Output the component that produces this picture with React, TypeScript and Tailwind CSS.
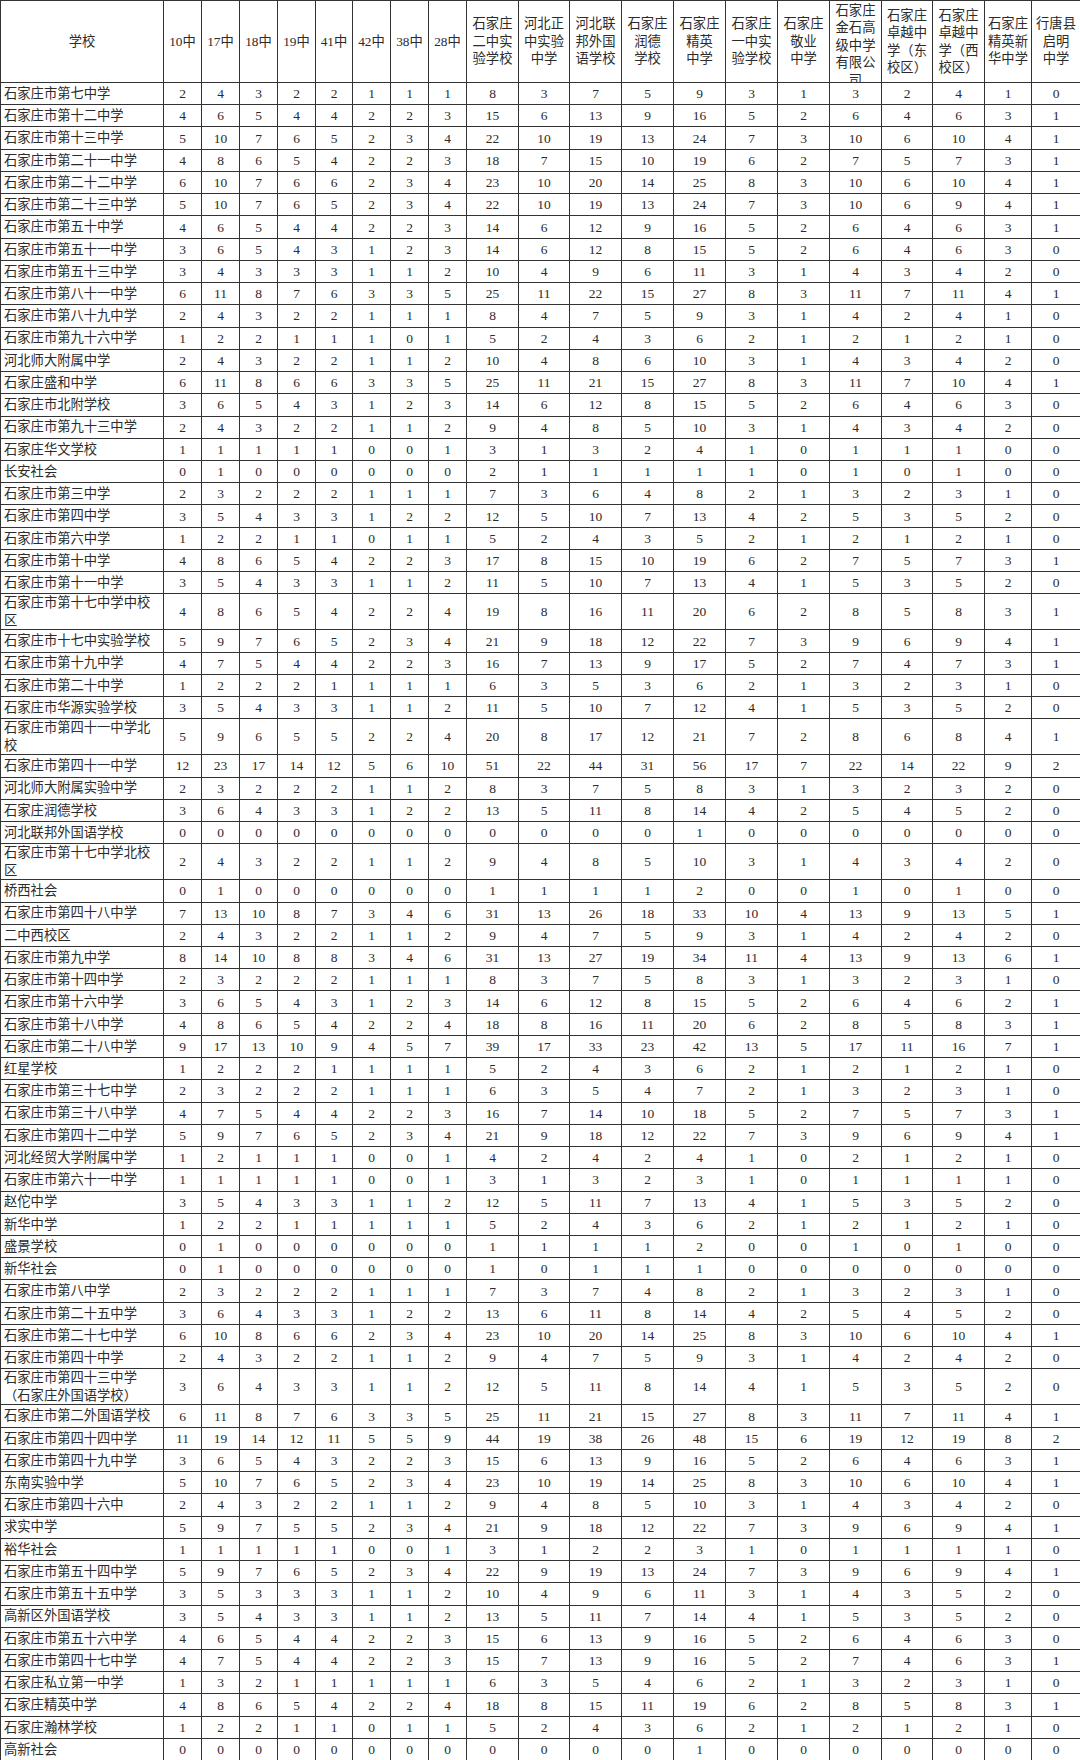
import React from "react";

const heads: string[][] = [
  ["10中"], ["17中"], ["18中"], ["19中"], ["41中"], ["42中"], ["38中"], ["28中"],
  ["石家庄", "二中实", "验学校"],
  ["河北正", "中实验", "中学"],
  ["河北联", "邦外国", "语学校"],
  ["石家庄", "润德", "学校"],
  ["石家庄", "精英", "中学"],
  ["石家庄", "一中实", "验学校"],
  ["石家庄", "敬业", "中学"],
  ["石家庄", "金石高", "级中学", "有限公", "司"],
  ["石家庄", "卓越中", "学（东", "校区）"],
  ["石家庄", "卓越中", "学（西", "校区）"],
  ["石家庄", "精英新", "华中学"],
  ["行唐县", "启明", "中学"],
];

const widths = [163, 38, 38, 38, 38, 37, 38, 38, 38, 52, 51, 52, 52, 52, 52, 52, 52, 51, 52, 47, 49];

const raw = `石家庄市第七中学|2 4 3 2 2 1 1 1 8 3 7 5 9 3 1 3 2 4 1 0
石家庄市第十二中学|4 6 5 4 4 2 2 3 15 6 13 9 16 5 2 6 4 6 3 1
石家庄市第十三中学|5 10 7 6 5 2 3 4 22 10 19 13 24 7 3 10 6 10 4 1
石家庄市第二十一中学|4 8 6 5 4 2 2 3 18 7 15 10 19 6 2 7 5 7 3 1
石家庄市第二十二中学|6 10 7 6 6 2 3 4 23 10 20 14 25 8 3 10 6 10 4 1
石家庄市第二十三中学|5 10 7 6 5 2 3 4 22 10 19 13 24 7 3 10 6 9 4 1
石家庄市第五十中学|4 6 5 4 4 2 2 3 14 6 12 9 16 5 2 6 4 6 3 1
石家庄市第五十一中学|3 6 5 4 3 1 2 3 14 6 12 8 15 5 2 6 4 6 3 0
石家庄市第五十三中学|3 4 3 3 3 1 1 2 10 4 9 6 11 3 1 4 3 4 2 0
石家庄市第八十一中学|6 11 8 7 6 3 3 5 25 11 22 15 27 8 3 11 7 11 4 1
石家庄市第八十九中学|2 4 3 2 2 1 1 1 8 4 7 5 9 3 1 4 2 4 1 0
石家庄市第九十六中学|1 2 2 1 1 1 0 1 5 2 4 3 6 2 1 2 1 2 1 0
河北师大附属中学|2 4 3 2 2 1 1 2 10 4 8 6 10 3 1 4 3 4 2 0
石家庄盛和中学|6 11 8 6 6 3 3 5 25 11 21 15 27 8 3 11 7 10 4 1
石家庄市北附学校|3 6 5 4 3 1 2 3 14 6 12 8 15 5 2 6 4 6 3 0
石家庄市第九十三中学|2 4 3 2 2 1 1 2 9 4 8 5 10 3 1 4 3 4 2 0
石家庄华文学校|1 1 1 1 1 0 0 1 3 1 3 2 4 1 0 1 1 1 0 0
长安社会|0 1 0 0 0 0 0 0 2 1 1 1 1 1 0 1 0 1 0 0
石家庄市第三中学|2 3 2 2 2 1 1 1 7 3 6 4 8 2 1 3 2 3 1 0
石家庄市第四中学|3 5 4 3 3 1 2 2 12 5 10 7 13 4 2 5 3 5 2 0
石家庄市第六中学|1 2 2 1 1 0 1 1 5 2 4 3 5 2 1 2 1 2 1 0
石家庄市第十中学|4 8 6 5 4 2 2 3 17 8 15 10 19 6 2 7 5 7 3 1
石家庄市第十一中学|3 5 4 3 3 1 1 2 11 5 10 7 13 4 1 5 3 5 2 0
石家庄市第十七中学中校区|4 8 6 5 4 2 2 4 19 8 16 11 20 6 2 8 5 8 3 1|2
石家庄市十七中实验学校|5 9 7 6 5 2 3 4 21 9 18 12 22 7 3 9 6 9 4 1
石家庄市第十九中学|4 7 5 4 4 2 2 3 16 7 13 9 17 5 2 7 4 7 3 1
石家庄市第二十中学|1 2 2 2 1 1 1 1 6 3 5 3 6 2 1 3 2 3 1 0
石家庄市华源实验学校|3 5 4 3 3 1 1 2 11 5 10 7 12 4 1 5 3 5 2 0
石家庄市第四十一中学北校|5 9 6 5 5 2 2 4 20 8 17 12 21 7 2 8 6 8 4 1|2
石家庄市第四十一中学|12 23 17 14 12 5 6 10 51 22 44 31 56 17 7 22 14 22 9 2
河北师大附属实验中学|2 3 2 2 2 1 1 2 8 3 7 5 8 3 1 3 2 3 2 0
石家庄润德学校|3 6 4 3 3 1 2 2 13 5 11 8 14 4 2 5 4 5 2 0
河北联邦外国语学校|0 0 0 0 0 0 0 0 0 0 0 0 1 0 0 0 0 0 0 0
石家庄市第十七中学北校区|2 4 3 2 2 1 1 2 9 4 8 5 10 3 1 4 3 4 2 0|2
桥西社会|0 1 0 0 0 0 0 0 1 1 1 1 2 0 0 1 0 1 0 0
石家庄市第四十八中学|7 13 10 8 7 3 4 6 31 13 26 18 33 10 4 13 9 13 5 1
二中西校区|2 4 3 2 2 1 1 2 9 4 7 5 9 3 1 4 2 4 2 0
石家庄市第九中学|8 14 10 8 8 3 4 6 31 13 27 19 34 11 4 13 9 13 6 1
石家庄市第十四中学|2 3 2 2 2 1 1 1 8 3 7 5 8 3 1 3 2 3 1 0
石家庄市第十六中学|3 6 5 4 3 1 2 3 14 6 12 8 15 5 2 6 4 6 2 1
石家庄市第十八中学|4 8 6 5 4 2 2 4 18 8 16 11 20 6 2 8 5 8 3 1
石家庄市第二十八中学|9 17 13 10 9 4 5 7 39 17 33 23 42 13 5 17 11 16 7 1
红星学校|1 2 2 2 1 1 1 1 5 2 4 3 6 2 1 2 1 2 1 0
石家庄市第三十七中学|2 3 2 2 2 1 1 1 6 3 5 4 7 2 1 3 2 3 1 0
石家庄市第三十八中学|4 7 5 4 4 2 2 3 16 7 14 10 18 5 2 7 5 7 3 1
石家庄市第四十二中学|5 9 7 6 5 2 3 4 21 9 18 12 22 7 3 9 6 9 4 1
河北经贸大学附属中学|1 2 1 1 1 0 0 1 4 2 4 2 4 1 0 2 1 2 1 0
石家庄市第六十一中学|1 1 1 1 1 0 0 1 3 1 3 2 3 1 0 1 1 1 1 0
赵佗中学|3 5 4 3 3 1 1 2 12 5 11 7 13 4 1 5 3 5 2 0
新华中学|1 2 2 1 1 1 1 1 5 2 4 3 6 2 1 2 1 2 1 0
盛景学校|0 1 0 0 0 0 0 0 1 1 1 1 2 0 0 1 0 1 0 0
新华社会|0 1 0 0 0 0 0 0 1 0 1 1 1 0 0 0 0 0 0 0
石家庄市第八中学|2 3 2 2 2 1 1 1 7 3 7 4 8 2 1 3 2 3 1 0
石家庄市第二十五中学|3 6 4 3 3 1 2 2 13 6 11 8 14 4 2 5 4 5 2 0
石家庄市第二十七中学|6 10 8 6 6 2 3 4 23 10 20 14 25 8 3 10 6 10 4 1
石家庄市第四十中学|2 4 3 2 2 1 1 2 9 4 7 5 9 3 1 4 2 4 2 0
石家庄市第四十三中学（石家庄外国语学校）|3 6 4 3 3 1 1 2 12 5 11 8 14 4 1 5 3 5 2 0|2
石家庄市第二外国语学校|6 11 8 7 6 3 3 5 25 11 21 15 27 8 3 11 7 11 4 1
石家庄市第四十四中学|11 19 14 12 11 5 5 9 44 19 38 26 48 15 6 19 12 19 8 2
石家庄市第四十九中学|3 6 5 4 3 2 2 3 15 6 13 9 16 5 2 6 4 6 3 1
东南实验中学|5 10 7 6 5 2 3 4 23 10 19 14 25 8 3 10 6 10 4 1
石家庄市第四十六中|2 4 3 2 2 1 1 2 9 4 8 5 10 3 1 4 3 4 2 0
求实中学|5 9 7 5 5 2 3 4 21 9 18 12 22 7 3 9 6 9 4 1
裕华社会|1 1 1 1 1 0 0 1 3 1 2 2 3 1 0 1 1 1 1 0
石家庄市第五十四中学|5 9 7 6 5 2 3 4 22 9 19 13 24 7 3 9 6 9 4 1
石家庄市第五十五中学|3 5 3 3 3 1 1 2 10 4 9 6 11 3 1 4 3 5 2 0
高新区外国语学校|3 5 4 3 3 1 1 2 13 5 11 7 14 4 1 5 3 5 2 0
石家庄市第五十六中学|4 6 5 4 4 2 2 3 15 6 13 9 16 5 2 6 4 6 3 0
石家庄市第四十七中学|4 7 5 4 4 2 2 3 15 7 13 9 16 5 2 7 4 6 3 1
石家庄私立第一中学|1 3 2 1 1 1 1 1 6 3 5 4 6 2 1 3 2 3 1 0
石家庄精英中学|4 8 6 5 4 2 2 4 18 8 15 11 19 6 2 8 5 8 3 1
石家庄瀚林学校|1 2 2 1 1 0 1 1 5 2 4 3 6 2 1 2 1 2 1 0
高新社会|0 0 0 0 0 0 0 0 0 0 0 0 1 0 0 0 0 0 0 0`;

const rows = raw.split("\n").map((line) => {
  const [name, nums, dbl] = line.split("|");
  return { name, nums: nums.trim().split(" "), dbl: dbl === "2" };
});

export default function App() {
  return (
    <div className="w-[1080px] bg-white text-[#2b2b2b] font-['Liberation_Serif','Noto_Sans_CJK_SC',serif]">
      <table className="border-collapse table-fixed w-[1080px]">
        <colgroup>
          {widths.map((w, i) => (
            <col key={i} style={{ width: w }} />
          ))}
        </colgroup>
        <thead>
          <tr className="h-[82px]">
            <th className="border border-[#333] font-normal text-[13.3px] leading-[17.5px] text-center align-middle">
              学校
            </th>
            {heads.map((h, i) => (
              <th
                key={i}
                className="border border-[#333] font-normal text-[13.3px] leading-[17.5px] text-center align-middle p-0"
              >
                {h.length > 4 ? (
                  <div className="h-[80px] overflow-hidden">
                    {h.map((l, j) => (
                      <div key={j}>{l}</div>
                    ))}
                  </div>
                ) : (
                  h.map((l, j) => <div key={j}>{l}</div>)
                )}
              </th>
            ))}
          </tr>
        </thead>
        <tbody>
          {rows.map((r, i) => (
            <tr key={i} className={r.dbl ? "h-[35.6px]" : "h-[22.24px]"}>
              <td className="border border-[#333] text-[13.3px] leading-[17.5px] pl-[3px] pr-[2px] py-0 text-left align-middle">
                {r.name}
              </td>
              {r.nums.map((n, j) => (
                <td
                  key={j}
                  className="border border-[#333] text-[13.5px] leading-[17px] p-0 text-center align-middle"
                >
                  {n}
                </td>
              ))}
            </tr>
          ))}
        </tbody>
      </table>
    </div>
  );
}
